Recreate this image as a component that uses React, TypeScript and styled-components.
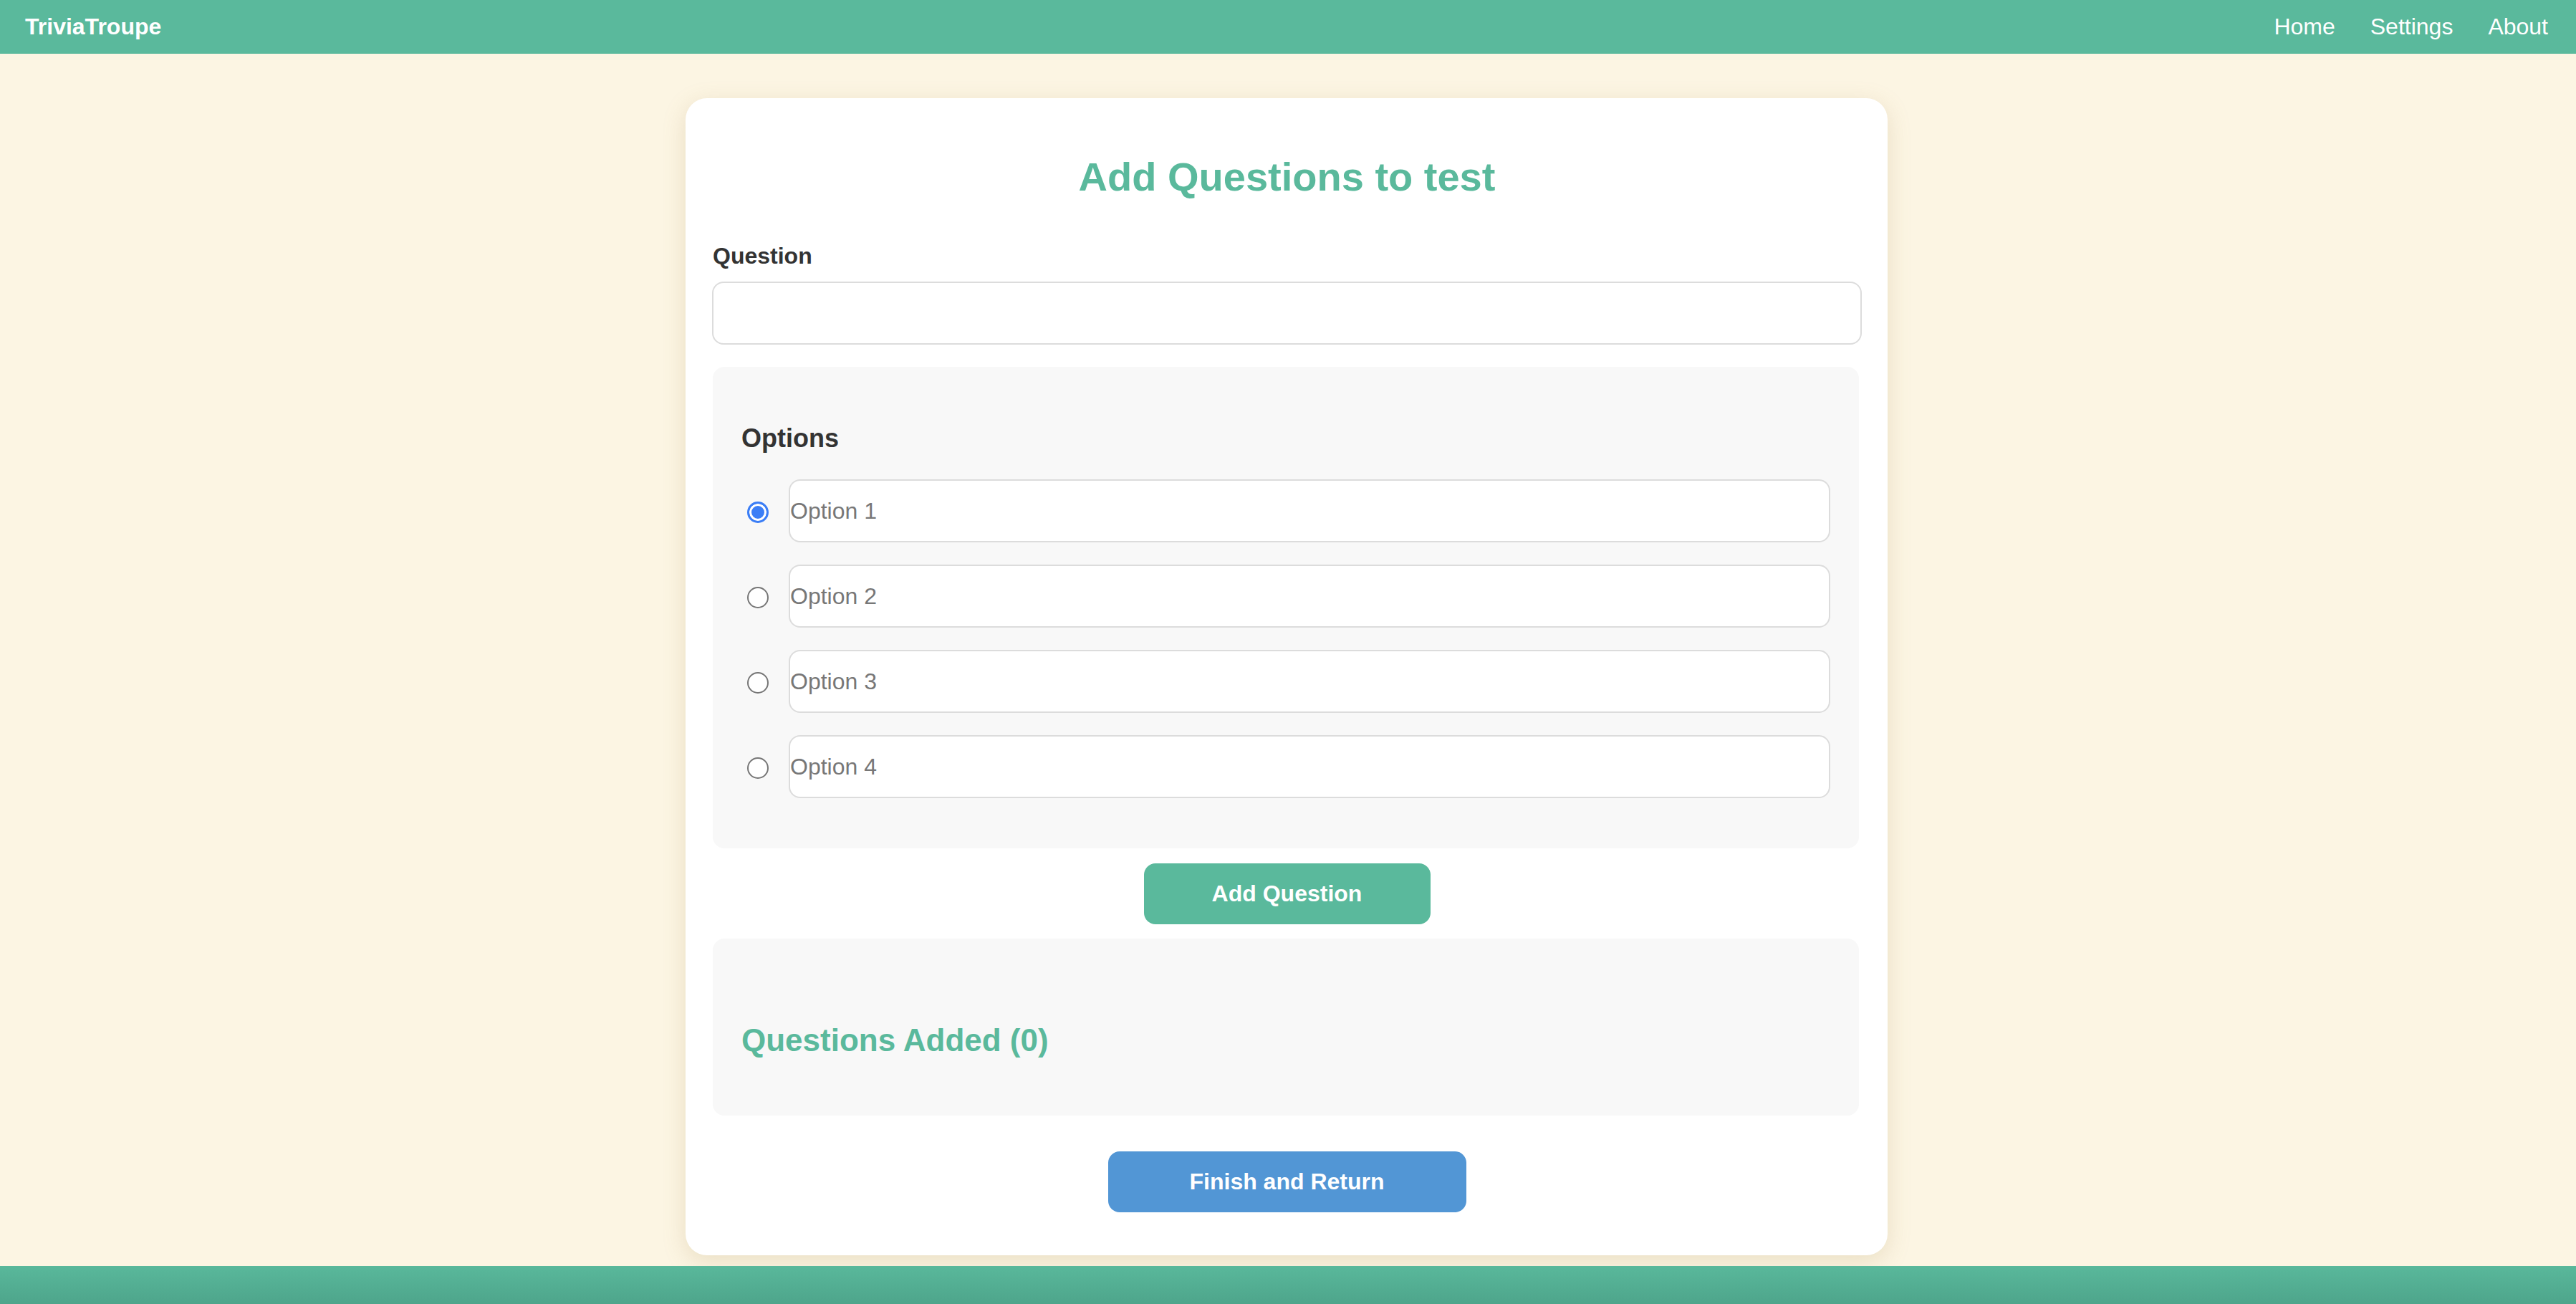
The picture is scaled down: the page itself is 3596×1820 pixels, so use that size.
import React from "react";
import styled, { createGlobalStyle } from "styled-components";

const GlobalStyle = createGlobalStyle`
  * { box-sizing: border-box; }
  html, body {
    margin: 0;
    padding: 0;
    background: #fcf5e3;
    font-family: "Liberation Sans", Arial, Helvetica, sans-serif;
    color: #333;
  }
`;

const Page = styled.div`
  min-height: 1820px;
  display: flex;
  flex-direction: column;
  background: #fcf5e3;
`;

const Header = styled.header`
  height: 75px;
  background: #5ab99c;
  display: flex;
  align-items: center;
  justify-content: space-between;
  padding: 0 39px 0 35px;
  color: #fff;
`;

const Logo = styled.div`
  font-size: 32px;
  font-weight: 700;
`;

const Nav = styled.nav`
  display: flex;
  gap: 49px;
`;

const NavLink = styled.a`
  font-size: 32px;
  color: #fff;
  text-decoration: none;
`;

const Main = styled.main`
  display: flex;
  justify-content: center;
  padding: 62px 4px 15px 0;
`;

const Card = styled.section`
  width: 1678px;
  background: #fff;
  border-radius: 30px;
  box-shadow: 0 8px 32px rgba(170, 140, 80, 0.22);
  padding: 36px 36px 60px 37px;
  display: flex;
  flex-direction: column;
`;

const Title = styled.h2`
  margin: 42px 0 60px;
  text-align: center;
  color: #5ab99c;
  font-size: 56px;
  font-weight: 700;
  line-height: 64px;
`;

const Label = styled.label`
  display: block;
  font-size: 32px;
  font-weight: 700;
  line-height: 37px;
  margin: 0 0 17px 1px;
  color: #333;
`;

const TextInput = styled.input`
  display: block;
  width: 100%;
  height: 88px;
  border: 2px solid #dcdcdc;
  border-radius: 16px;
  background: #fff;
  padding: 0;
  font-family: inherit;
  font-size: 32px;
  color: #333;
  outline: none;
  &::placeholder {
    color: #777;
  }
`;

const QuestionInput = styled(TextInput)`
  margin-bottom: 31px;
`;

const GrayBox = styled.div<{ $top: number; $bottom: number }>`
  background: #f8f8f8;
  border-radius: 16px;
  margin: 0 4px 0 1px;
  padding: 40px 40px ${(p) => p.$bottom}px;
  padding-top: ${(p) => p.$top}px;
`;

const OptionsHeading = styled.h3`
  margin: 0 0 37px;
  font-size: 36px;
  line-height: 41px;
  font-weight: 700;
  color: #333;
`;

const OptionList = styled.div`
  display: flex;
  flex-direction: column;
  gap: 31px;
`;

const OptionRow = styled.div`
  display: flex;
  align-items: center;
  gap: 28px;
`;

const Radio = styled.input`
  appearance: none;
  -webkit-appearance: none;
  flex: 0 0 auto;
  width: 30px;
  height: 30px;
  margin: 4px 0 0 8px;
  border-radius: 50%;
  border: 2px solid #767676;
  background: #fff;
  &:checked {
    border: 3px solid #3b7ef6;
    background: #3b7ef6;
    box-shadow: inset 0 0 0 3px #fff;
  }
`;

const ButtonRow = styled.div<{ $top: number }>`
  display: flex;
  justify-content: center;
  margin: ${(p) => p.$top}px 0 20px;
`;

const Button = styled.button<{ $color: string; $width: number }>`
  width: ${(p) => p.$width}px;
  height: 85px;
  border: none;
  border-radius: 16px;
  background: ${(p) => p.$color};
  color: #fff;
  font-family: inherit;
  font-size: 32px;
  font-weight: 700;
  cursor: pointer;
`;

const FinishRow = styled.div`
  display: flex;
  justify-content: center;
  margin-top: 50px;
`;

const AddedHeading = styled.h3`
  margin: 76px 0 40px;
  font-size: 44px;
  line-height: 51px;
  font-weight: 700;
  color: #5ab99c;
`;

const Footer = styled.footer`
  height: 53px;
  background: linear-gradient(to bottom, #59b89b 0%, #4ea58b 100%);
`;

export default function App() {
  const options = ["Option 1", "Option 2", "Option 3", "Option 4"];
  return (
    <Page>
      <GlobalStyle />
      <Header>
        <Logo>TriviaTroupe</Logo>
        <Nav>
          <NavLink href="#">Home</NavLink>
          <NavLink href="#">Settings</NavLink>
          <NavLink href="#">About</NavLink>
        </Nav>
      </Header>
      <Main>
        <Card>
          <Title>Add Questions to test</Title>
          <Label htmlFor="question">Question</Label>
          <QuestionInput id="question" type="text" />
          <GrayBox $top={79} $bottom={70}>
            <OptionsHeading>Options</OptionsHeading>
            <OptionList>
              {options.map((o, i) => (
                <OptionRow key={o}>
                  <Radio type="radio" name="correct" defaultChecked={i === 0} />
                  <TextInput type="text" placeholder={o} />
                </OptionRow>
              ))}
            </OptionList>
          </GrayBox>
          <ButtonRow $top={21}>
            <Button $color="#5ab99c" $width={400}>Add Question</Button>
          </ButtonRow>
          <GrayBox $top={40} $bottom={40}>
            <AddedHeading>Questions Added (0)</AddedHeading>
          </GrayBox>
          <FinishRow>
            <Button $color="#5296d5" $width={500}>Finish and Return</Button>
          </FinishRow>
        </Card>
      </Main>
      <Footer />
    </Page>
  );
}
